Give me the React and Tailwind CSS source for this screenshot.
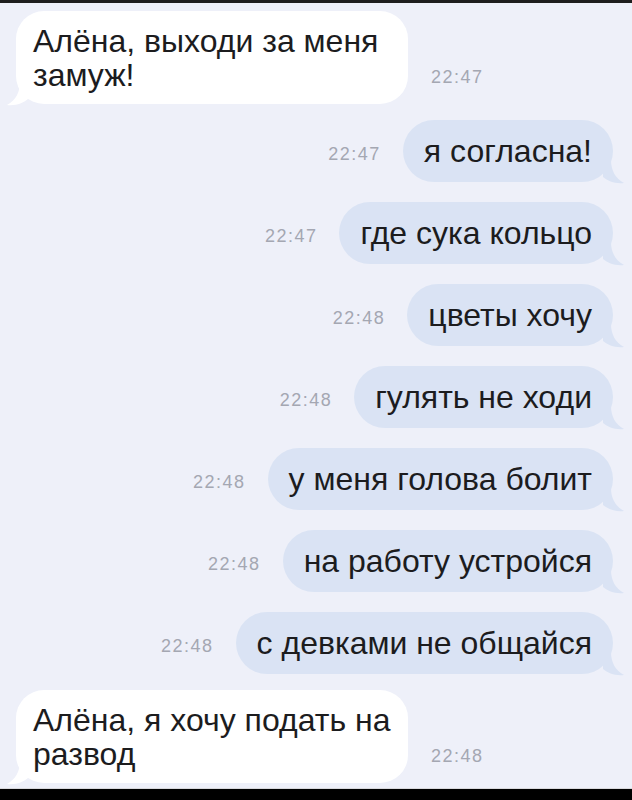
import React from "react";

const FONT = { fontFamily: '"Liberation Sans", Arial, sans-serif' };

function RightTail() {
  return (
    <svg
      className="absolute right-[-12px] bottom-[-2px]"
      width="22"
      height="24"
      viewBox="0 0 22 24"
    >
      <path d="M0 0 L8 0 C8 10 12 18 21 23 C12 24 5 21 0 17 Z" fill="#dae3f4" />
    </svg>
  );
}

function LeftTail() {
  return (
    <svg
      className="absolute left-[-10px] bottom-[-2px]"
      width="22"
      height="24"
      viewBox="0 0 22 24"
    >
      <path d="M22 0 L14 0 C14 10 10 18 1 23 C10 24 17 21 22 17 Z" fill="#ffffff" />
    </svg>
  );
}

function Time({ children }) {
  return (
    <span className="text-[18px] leading-none tracking-[1.5px] text-[#a4a7b2]" style={FONT}>
      {children}
    </span>
  );
}

function Out({ text, time }) {
  return (
    <div className="flex items-center justify-end gap-[22px] pr-[19px]">
      <span className="mt-[6px]">
        <Time>{time}</Time>
      </span>
      <div className="relative h-[62px] flex items-center rounded-[31px] bg-[#dae3f4] px-[21px]">
        <span className="text-[32px] leading-none text-[#1c1c1e] whitespace-nowrap" style={FONT}>
          {text}
        </span>
        <RightTail />
      </div>
    </div>
  );
}

function In({ lines, time }) {
  return (
    <div className="flex items-end pl-[16px]">
      <div className="relative w-[392px] rounded-[28px] bg-white px-[17px] pt-[13px] pb-[12px]">
        <div className="text-[32px] leading-[34px] text-[#1c1c1e]" style={FONT}>
          {lines.map((l, i) => (
            <div key={i} className="whitespace-nowrap">{l}</div>
          ))}
        </div>
        <LeftTail />
      </div>
      <div className="ml-[23px] mb-[15px]">
        <Time>{time}</Time>
      </div>
    </div>
  );
}

export default function App() {
  const outs = [
    ["я согласна!", "22:47"],
    ["где сука кольцо", "22:47"],
    ["цветы хочу", "22:48"],
    ["гулять не ходи", "22:48"],
    ["у меня голова болит", "22:48"],
    ["на работу устройся", "22:48"],
    ["с девками не общайся", "22:48"],
  ];
  return (
    <div className="w-[632px] h-[800px] flex flex-col bg-[#eef0f9] overflow-hidden">
      <div className="h-[3px] bg-[#1e1e1e] shrink-0" />
      <div className="flex-1 overflow-hidden flex flex-col pt-[8px]">
        <In lines={["Алёна, выходи за меня", "замуж!"]} time="22:47" />
        <div className="flex flex-col gap-[20px] mt-[16px]">
          {outs.map(([t, tm], i) => (
            <Out key={i} text={t} time={tm} />
          ))}
        </div>
        <div className="mt-[16px]">
          <In lines={["Алёна, я хочу подать на", "развод"]} time="22:48" />
        </div>
      </div>
      <div className="h-[12px] bg-black border-t border-[#d8d8dc] shrink-0" />
    </div>
  );
}
